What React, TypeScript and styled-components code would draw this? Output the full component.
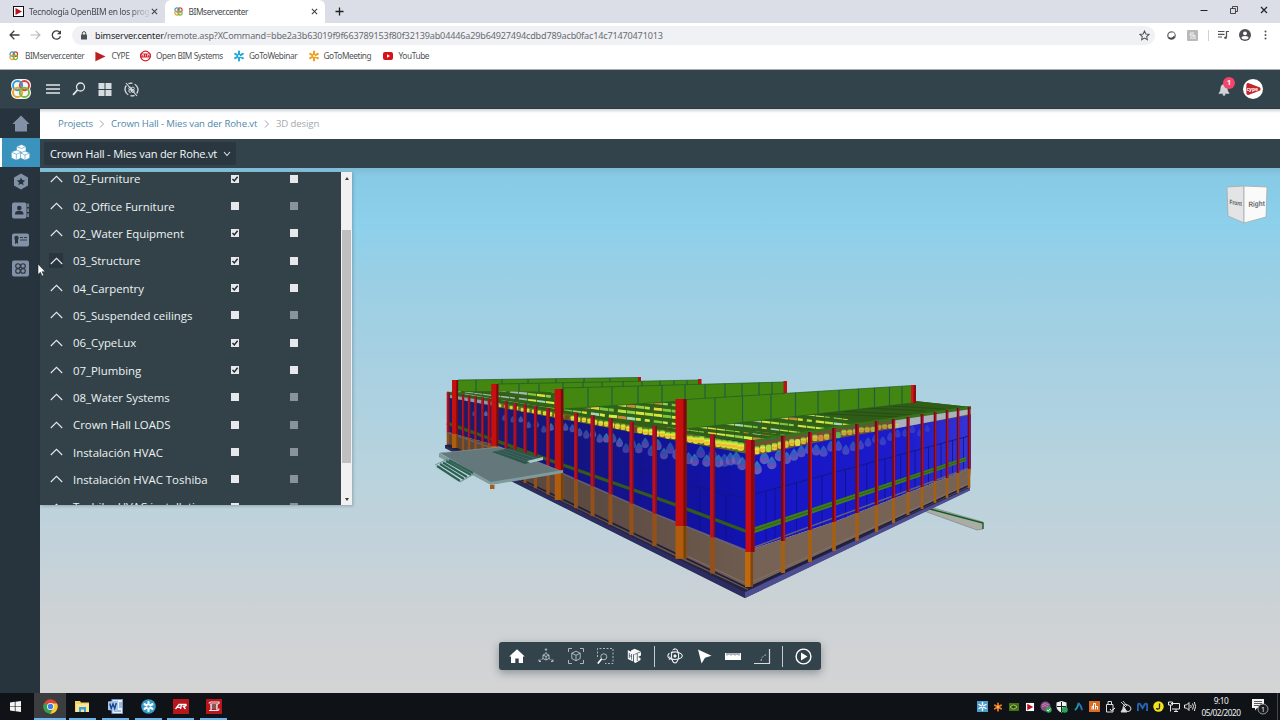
import React from "react";
import styled, { createGlobalStyle } from "styled-components";

const Global = createGlobalStyle`
  * { box-sizing: border-box; }
  html, body, #root { margin: 0; padding: 0; width: 1280px; height: 720px; overflow: hidden; }
  svg { display: block; flex: none; }
`;

const ui = `"Noto Sans", sans-serif`;
const page = `"Open Sans", sans-serif`;

const Screen = styled.div`
  width: 1280px;
  height: 720px;
  display: flex;
  flex-direction: column;
  background: #fff;
  font-family: ${page};
`;

/* ---------- browser ---------- */

const TabStrip = styled.div`
  height: 23px;
  flex: none;
  display: flex;
  justify-content: space-between;
  background: #dbdee7;
  font: 8.4px/23px ${ui};
  color: #45494d;
`;
const Tabs = styled.div`display: flex;`;
const Tab = styled.div<{ $w: number; $active?: boolean; $left: number }>`
  width: ${(p) => p.$w}px;
  height: 23px;
  padding: 0 7px 0 ${(p) => p.$left}px;
  display: flex;
  align-items: center;
  background: ${(p) => (p.$active ? "#fff" : "transparent")};
  border-radius: 6px 6px 0 0;
`;
const TabTitle = styled.span<{ $fade?: boolean; $gap: number; $track: number }>`
  flex: 1;
  margin-left: ${(p) => p.$gap}px;
  white-space: nowrap;
  letter-spacing: ${(p) => p.$track}px;
  mask-image: ${(p) => (p.$fade ? "linear-gradient(90deg, #000 82%, rgba(0, 0, 0, 0.15) 97%)" : "none")};
`;
const WindowButtons = styled.div`
  display: flex;
  align-items: center;
  height: 19px;
  gap: 22px;
  padding-right: 12px;
`;
const AddressRow = styled.div`
  height: 24px;
  flex: none;
  display: flex;
  align-items: center;
  background: #fff;
`;
const NavButtons = styled.div`
  width: 72px;
  padding-left: 9px;
  display: flex;
  gap: 10px;
`;
const Omnibox = styled.div`
  width: 1083px;
  height: 19px;
  padding: 0 5px 0 7px;
  display: flex;
  align-items: center;
  border-radius: 10px;
  background: #f0f1f4;
`;
const Url = styled.div`
  flex: 1;
  margin-left: 6px;
  font: 9.1px/19px ${ui};
  letter-spacing: -0.17px;
  color: #696c70;
  white-space: nowrap;
  b { font-weight: 400; color: #26282b; }
`;
const ExtensionBar = styled.div`
  flex: 1;
  display: flex;
  align-items: center;
  justify-content: space-between;
  padding: 0 10px 0 11px;
`;
const Divider = styled.i<{ $h: number; $c: string }>`
  width: 1px;
  height: ${(p) => p.$h}px;
  background: ${(p) => p.$c};
`;
const Bookmarks = styled.div`
  height: 22px;
  flex: none;
  padding-left: 9px;
  display: flex;
  font: 8.3px/18px ${ui};
  letter-spacing: -0.42px;
  color: #505357;
`;
const Bookmark = styled.div<{ $w: number; $gap: number }>`
  width: ${(p) => p.$w}px;
  height: 18px;
  display: flex;
  align-items: center;
  gap: ${(p) => p.$gap}px;
  white-space: nowrap;
`;

/* ---------- application ---------- */

const Header = styled.header`
  height: 40px;
  flex: none;
  display: flex;
  align-items: center;
  justify-content: space-between;
  background: #33434b;
  border-top: 1px solid #a9aeb2;
  border-bottom: 1px solid #2c3a42;
`;
const HeaderGroup = styled.div<{ $gap: number; $l?: number; $r?: number }>`
  display: flex;
  align-items: center;
  gap: ${(p) => p.$gap}px;
  padding-left: ${(p) => p.$l ?? 0}px;
  padding-right: ${(p) => p.$r ?? 0}px;
`;
const BellBox = styled.div`position: relative;`;
const Badge = styled.span`
  position: absolute;
  left: 5px;
  top: -6px;
  width: 12px;
  height: 12px;
  border-radius: 50%;
  background: #f3456c;
  color: #fff;
  font: 700 7px/12px ${page};
  text-align: center;
`;
const Body = styled.div`
  height: 584px;
  flex: none;
  display: flex;
`;
const Sidebar = styled.nav`
  width: 40px;
  background: #27333d;
`;
const SideItem = styled.div<{ $active?: boolean }>`
  height: 29px;
  display: flex;
  align-items: center;
  justify-content: center;
  padding-left: 1px;
  color: ${(p) => (p.$active ? "#fff" : "#8291a5")};
  background: ${(p) => (p.$active ? "#3a93bd" : "transparent")};
  box-shadow: ${(p) => (p.$active ? "inset 2px 0 #fff" : "none")};
`;
const Main = styled.main`
  flex: 1;
  display: flex;
  flex-direction: column;
`;
const Crumbs = styled.div`
  height: 30px;
  flex: none;
  padding-left: 18px;
  display: flex;
  align-items: center;
  background: linear-gradient(#cfd2d4, #fff 4px);
  font: 9.6px/30px ${page};
  letter-spacing: -0.12px;
  color: #5088a8;
  white-space: nowrap;
`;
const Crumb = styled.span<{ $w: number; $muted?: boolean }>`
  width: ${(p) => p.$w}px;
  color: ${(p) => (p.$muted ? "#a4a9ad" : "inherit")};
`;
const CrumbArrow = styled.svg`margin: 0 6px 0 7px;`;
const ProjectBar = styled.div`
  height: 29px;
  flex: none;
  padding: 3px 0 0 4px;
  background: #33434b;
`;
const ProjectSelect = styled.div`
  width: 192px;
  height: 23px;
  padding: 0 5px 0 6px;
  display: flex;
  align-items: center;
  justify-content: space-between;
  background: #2a3740;
  color: #f4f7f8;
  font: 500 11.1px/23px ${page};
  letter-spacing: -0.2px;
  white-space: nowrap;
`;
const Viewport = styled.section`
  position: relative;
  height: 525px;
  background: linear-gradient(#7fbcd6 0, #87cae6 8px, #8dd0eb 55px, #9ccfe4 120px, #a8d0e1 200px, #b7d3de 295px, #c3d2da 380px, #cdd2d5 445px, #d4d4d4 525px);
`;

const Panel = styled.div`
  position: absolute;
  left: 0;
  top: 4px;
  width: 312px;
  height: 333px;
  display: flex;
  overflow: hidden;
  box-shadow: 1px 1px 3px rgba(40, 60, 70, 0.3);
`;
const LayerList = styled.div`
  flex: 1;
  padding-left: 10px;
  overflow: hidden;
  background: #334249;
`;
const LayerRows = styled.div`margin-top: -7px;`;
const LayerRow = styled.div`
  height: 27.35px;
  display: flex;
  align-items: center;
  font: 500 11.4px/27px ${page};
  color: #edf2f4;
  white-space: nowrap;
`;
const Caret = styled.span<{ $hover?: boolean }>`
  width: 14px;
  height: 15px;
  flex: none;
  margin-right: 10px;
  margin-left: -1px;
  display: flex;
  align-items: center;
  justify-content: center;
  background: ${(p) => (p.$hover ? "#2a363e" : "transparent")};
`;
const LayerName = styled.span`
  width: 158.4px;
  flex: none;
`;
const Check = styled.span<{ $dim?: boolean }>`
  width: 8px;
  height: 8px;
  flex: none;
  margin-right: 50.6px;
  background: ${(p) => (p.$dim ? "#89949a" : "#e6e8ec")};
`;
const Scrollbar = styled.div`
  width: 11px;
  padding: 0 1px;
  display: flex;
  flex-direction: column;
  align-items: center;
  background: #f1f1f1;
`;
const ScrollArrow = styled.i<{ $down?: boolean }>`
  width: 0;
  height: 0;
  margin-top: ${(p) => (p.$down ? 35 : 5)}px;
  border: 2px solid transparent;
  border-top: ${(p) => (p.$down ? "3px solid #3b3b3b" : "0")};
  border-bottom: ${(p) => (p.$down ? "0" : "3px solid #3b3b3b")};
`;
const Thumb = styled.div`
  width: 9px;
  height: 233px;
  margin-top: 50px;
  background: #bfbfc0;
`;

const ToolBar = styled.div`
  position: absolute;
  left: 459px;
  top: 474px;
  width: 322px;
  height: 28px;
  padding: 0 3.3px;
  display: flex;
  align-items: center;
  border-radius: 3px;
  background: #33434b;
  box-shadow: 0 3px 8px rgba(40, 50, 60, 0.4);
`;
const Tool = styled.div`
  width: 29.35px;
  display: flex;
  justify-content: center;
`;
const ToolGap = styled.div`
  width: 11px;
  display: flex;
  justify-content: center;
`;
const ViewCube = styled.svg`
  position: absolute;
  right: 12px;
  top: 17px;
`;
const Pointer = styled.svg`
  position: absolute;
  left: -3px;
  top: 95px;
`;

/* ---------- taskbar ---------- */

const TaskBar = styled.footer`
  height: 27px;
  flex: none;
  display: flex;
  justify-content: space-between;
  background: #0f1216;
`;
const TaskGroup = styled.div`display: flex;`;
const TaskButton = styled.div<{ $w: number; $open?: boolean; $active?: boolean }>`
  width: ${(p) => p.$w}px;
  height: 27px;
  padding-right: ${(p) => (p.$open ? 0 : 3)}px;
  display: flex;
  align-items: center;
  justify-content: center;
  background-color: ${(p) => (p.$active ? "#3b3d3f" : "transparent")};
  background-image: ${(p) => (p.$open ? "linear-gradient(#6db3ee, #6db3ee)" : "none")};
  background-repeat: no-repeat;
  background-position: center bottom;
  background-size: ${(p) => (p.$active ? "100%" : "27px")} 2px;
`;
const TrayItem = styled.div<{ $w?: number }>`
  width: ${(p) => p.$w ?? 16}px;
  height: 27px;
  display: flex;
  align-items: center;
  justify-content: center;
`;
const Clock = styled.div`
  width: 46px;
  padding-top: 2px;
  font: 8.3px/12px ${ui};
  letter-spacing: -0.5px;
  text-align: center;
  color: #f0f0f0;
`;

/* ---------- icons ---------- */

const Clover = ({ s, bg }: { s: number; bg?: string }) => (
  <svg width={s} height={s} viewBox="0 0 20 20" fill="none" strokeWidth={bg ? 1.9 : 2.6}>
    {bg && <path d="M6 0h8a6 6 0 0 1 6 6q0 2.500-1 4 1 1.500 1 4a6 6 0 0 1-6 6H6a6 6 0 0 1-6-6q0-2.500 1-4-1-1.500-1-4a6 6 0 0 1 6-6" fill={bg} />}
    <circle cx="6.6" cy="6.6" r="4.6" stroke="#2f9fd0" />
    <circle cx="13.4" cy="6.6" r="4.6" stroke="#dd3b44" />
    <circle cx="6.6" cy="13.4" r="4.6" stroke="#efa02b" />
    <circle cx="13.4" cy="13.4" r="4.6" stroke="#78b93c" />
    <path d="M9.500 3.200a4.600 4.600 0 0 1 1.700 3.400" stroke="#2f9fd0" />
  </svg>
);
const CypeMark = ({ w = 11, frame }: { w?: number; frame?: boolean }) => (
  <svg width={w} height={w} viewBox="0 0 11 11">
    {frame && <rect x="0.5" y="0.5" width="10" height="10" fill="#fff" stroke="#111" />}
    {frame ? <path d="M2.500 2 9 5.500 2.500 9z" fill="#b90f22" /> : <path d="M1 1Q0 .4 .4 1.600V9.400Q0 10.600 1 10L10.500 5.500z" fill="#bb2020" />}
  </svg>
);
const Flower = ({ c, s = 12, bg }: { c: string; s?: number; bg?: string }) => (
  <svg width={s} height={s} viewBox="0 0 12 12" stroke={c} strokeWidth={bg ? 1.5 : 2.1} strokeLinecap="round">
    {bg && <rect width="12" height="12" fill={bg} stroke="none" />}
    <path d="M6 1.600v8.800M2.200 3.800l7.600 4.400M9.800 3.800 2.200 8.200" />
    <circle cx="6" cy="6" r="1" fill={bg ?? "#fff"} stroke="none" />
  </svg>
);
const Cross = ({ s = 7, c = "#3c4043" }: { s?: number; c?: string }) => (
  <svg width={s} height={s} viewBox="0 0 8 8" stroke={c} strokeWidth="1.2"><path d="m1 1 6 6M7 1 1 7" /></svg>
);
const Chevron = ({ d, w, h }: { d: string; w: number; h: number }) => (
  <svg width={w} height={h} viewBox={`0 0 ${w} ${h}`} fill="none" stroke="#e3e9ec" strokeWidth="1.1"><path d={d} /></svg>
);

/* ---------- model ---------- */

type P = [number, number];
const pts = (a: P[]) => a.map((p) => p.join(",")).join(" ");
const lerp = (a: P[], x: number) => {
  for (let i = 1; i < a.length; i++)
    if (x <= a[i][0] || i === a.length - 1) {
      const [x0, y0] = a[i - 1];
      const [x1, y1] = a[i];
      return y0 + ((y1 - y0) * (x - x0)) / (x1 - x0);
    }
  return a[0][1];
};
const noise = (n: number) => {
  const v = Math.sin(n * 127.1 + 31.7) * 43758.5453;
  return v - Math.floor(v);
};

const right = [
  [783, 436, 541, 573, 4.2], [810, 432, 530, 562, 4], [834, 428, 522, 551, 3.8], [857, 424, 513, 541, 3.6],
  [876.5, 421, 505, 532, 3.4], [893.5, 419, 498, 523, 3.2], [908, 417, 492, 515, 3], [922, 414, 487, 509, 2.8],
  [935, 412, 481, 503, 2.6], [947, 410, 478, 498, 2.5], [958, 408, 473, 493, 2.4], [969, 407, 469, 488, 2.6],
];
const leftTop: P[] = [[447, 393], [559, 411], [655, 427], [748, 441]];
const leftRed: P[] = [[447, 432], [495, 445], [559, 472], [655, 514], [748, 552]];
const leftBase: P[] = [[447, 444], [559, 500], [677, 557], [748, 590]];
const leftCols: [number, number][] = [
  [448, 2.6], [463, 2.2], [469, 2.3], [475.5, 2.4], [482.5, 2.5], [489, 2.6], [506, 2.8], [515, 3], [525, 3],
  [535.5, 3.2], [548, 3.4], [576, 3.8], [592.5, 4], [610.5, 4], [631.5, 4.2], [654.5, 4.4], [712.5, 5],
];
const bigCols = [[455, 380, 6, 434], [494.8, 384, 7, 446], [559, 389, 8.5, 473], [681, 399, 11, 526]];
const rightTop: P[] = [[752, 443], [834, 428], [971, 407]];
const rightBlue: P[] = [[752, 456], [834, 439], [971, 415]];
const rightRed: P[] = [[752, 549], [834, 522], [971, 468]];

const Girder = ({ p, cuts }: { p: P[]; cuts: number[] }) => (
  <g>
    <polygon points={pts(p)} fill="#438711" stroke="#1e5a28" strokeWidth="0.7" />
    {cuts.map((x) => (
      <line key={x} x1={x} x2={x} y1={lerp([p[0], p[1]], x)} y2={lerp([p[3], p[2]], x)} stroke="#1f5f45" strokeWidth="1.2" />
    ))}
  </g>
);

const Drop = ({ x, y, s, o, fill }: { x: number; y: number; s: number; o: number; fill: string }) => (
  <path
    d={`M${x} ${y - s * 1.5}C${x + s * 0.4} ${y - s} ${x + s} ${y - s * 0.4} ${x + s} ${y + s * 0.3}A${s} ${s} 0 0 1 ${x - s} ${y + s * 0.3}C${x - s} ${y - s * 0.4} ${x - s * 0.4} ${y - s} ${x} ${y - s * 1.5}`}
    fill={fill}
    opacity={o}
  />
);

const lampColours = ["#e8ee3a", "#f4e23a", "#a9e33c", "#ef9a32", "#c7ee47", "#8e3a22", "#54d862", "#eef04a"];
const bandColours = ["#b8e23b", "#dbe43c", "#8fd04a", "#e8d63c", "#a7d6b0", "#c98a35", "#7cc63a", "#d6ea4a"];

const Building = () => (
  <svg width="1240" height="525" viewBox="40 168 1240 525">
    <defs>
      <linearGradient id="drop" x2="0" y2="1">
        <stop offset="0" stopColor="#2fae9c" />
        <stop offset="0.4" stopColor="#3d84c0" />
        <stop offset="0.75" stopColor="#9a62b4" />
        <stop offset="1" stopColor="#3f9cb0" />
      </linearGradient>
      <linearGradient id="lamp" x2="0" y2="1">
        <stop offset="0" stopColor="#58c83a" />
        <stop offset="0.35" stopColor="#e3ea38" />
        <stop offset="0.65" stopColor="#f2b234" />
        <stop offset="1" stopColor="#d9f03c" />
      </linearGradient>
      <linearGradient id="wallL"><stop offset="0" stopColor="#1d1d66" /><stop offset="0.45" stopColor="#141482" /><stop offset="1" stopColor="#1212b0" /></linearGradient>
      <linearGradient id="wallR"><stop offset="0" stopColor="#1515c4" /><stop offset="0.7" stopColor="#1c1ccc" /><stop offset="1" stopColor="#3434d6" /></linearGradient>
      <linearGradient id="bulk"><stop offset="0" stopColor="#5a4638" /><stop offset="0.5" stopColor="#5c4b42" /><stop offset="1" stopColor="#6f5c50" /></linearGradient>
      <clipPath id="roof"><polygon points="450,391 560,392 687,399 800,398 915,401 971,407 750,443" /></clipPath>
    </defs>

    {/* ramp */}
    <polygon points="924,511 934,508 983,522 983,529 977,530" fill="#a9ada5" stroke="#777d78" strokeWidth="0.6" />
    <path d="M930 509 983 523v6" fill="none" stroke="#0f5c22" strokeWidth="1.3" />

    {/* slab */}
    <polygon points="445,445 455,444 748,587 969,485 970,490 745,598 445,448" fill="#24243f" />
    <polygon points="445,445.5 745,592 745,598 445,448" fill="#2c2c60" />
    <polygon points="745,592 970,487.5 970,490.5 745,598" fill="#4d4d90" />

    {/* rear girders */}
    <Girder p={[[458, 380], [640, 377.5], [640, 386], [458, 394]]} cuts={[476, 502, 528, 556, 584, 610]} />
    <rect x="638" y="377" width="3" height="5" fill="#b81414" />
    <Girder p={[[498, 384], [700, 380], [700, 390], [498, 400]]} cuts={[519, 539, 563, 583, 602, 623, 642, 660, 674, 687]} />
    <rect x="698" y="379" width="3.5" height="6" fill="#b81414" />

    {/* roof */}
    <g clipPath="url(#roof)">
      <rect x="440" y="385" width="540" height="60" fill="#315f1b" />
      {Array.from({ length: 11 }, (_, row) =>
        Array.from({ length: 44 }, (_, k) => {
          const x = 456 + k * 9;
          const y = 372 + row * 6.2 + (x - 456) * 0.115;
          const far = x < 520;
          return (
            <rect key={`${row}-${k}`} x={x} y={y} width={noise(row * 50 + k) > 0.2 ? 8.4 : 5} height="3" transform={`rotate(6.600 ${x} ${y})`}
              fill={far ? "#a9b4ac" : bandColours[Math.floor(noise(row * 91 + k * 3) * 8)]} />
          );
        })
      )}
      {right.slice(0, 8).map((r, i) => (
        <path key={i} d={`M${r[0] - 330} ${r[1] - 44 + i * 2}L${r[0]} ${r[1]}`} stroke="#2f6418" strokeWidth={2.4 - i * 0.1} />
      ))}
      <polygon points="800,411 860,398 915,400 975,406 870,423" fill="#2f5c17" />
      <path d="M780 412 900 417M800 409 912 415M830 406 925 411M858 404 945 409" stroke="#274f13" strokeWidth="1" />
    </g>

    {/* walls */}
    <polygon points={pts([...leftTop, ...[...leftRed].reverse()])} fill="url(#wallL)" />
    <polygon points={pts([...rightTop, ...[...rightRed].reverse()])} fill="url(#wallR)" />
    <polygon points={pts([...leftRed, ...[...leftBase].reverse()])} fill="url(#bulk)" />
    <polygon points={pts([...rightRed, [969, 487], [752, 586]])} fill="#766356" />
    <path d="M752 582 969 484M687 556 745 583" stroke="#877567" strokeWidth="0.8" />
    <path d="M748 588 970 485M447 444 748 588" fill="none" stroke="#1c1c42" strokeWidth="1.6" />

    {/* light solids */}
    {Array.from({ length: 40 }, (_, i) => {
      const x = 474 + Math.pow(i / 40, 0.85) * 274;
      const s = 1.8 + ((x - 470) / 276) * 3.2;
      const y = lerp(leftTop, x) + 8 + s * 2.2 + noise(i + 9) * s * 3;
      return <Drop key={i} x={x} y={y} s={s} fill="url(#drop)" o={0.4 + noise(i) * 0.35} />;
    })}
    {Array.from({ length: 24 }, (_, i) => {
      const x = 757 + i * 7.4;
      const s = 4.9 - i * 0.1;
      const y = lerp(rightBlue, x) + 4 + noise(i + 40) * s * 2.6;
      return <Drop key={i} x={x} y={y} s={s} fill="url(#drop)" o={0.75 - i * 0.022} />;
    })}
    <polygon points="497,402 748,443 748,454 497,407" fill="#5f6a1c" />
    <polygon points={pts([...rightTop, ...[...rightBlue].reverse()])} fill="#6f5236" />
    <polygon points="893,419 971,407 971,414 893,429" fill="#aab1bc" />
    <polygon points="450,394 500,401 500,407 450,398" fill="#96959f" />
    {Array.from({ length: 44 }, (_, i) => {
      const x = 500 + i * 5.6;
      const s = 1.5 + ((x - 500) / 250) * 2.3;
      const odd = noise(i + 5);
      return <rect key={i} x={x - s} y={lerp(leftTop, x) + 2 + odd * s * 0.5} width={s * 1.9} height={s * 2.2} rx={s * 0.7} fill={odd > 0.85 ? "#7a4424" : "url(#lamp)"} />;
    })}
    {Array.from({ length: 25 }, (_, i) => {
      const x = 757 + i * 5.8;
      const odd = noise(i + 55);
      return <rect key={i} x={x - 2.7} y={lerp(rightTop, x) + 3 + odd * 2} width="5.400" height={8 - i * 0.14} rx="2.200" fill={odd > 0.6 ? lampColours[i % 8] : "url(#lamp)"} opacity={1 - i * 0.02} />;
    })}

    {/* mullions */}
    <path d="M755 494 969 436M690 485 745 498M640 470 680 481M565 448 650 470" fill="none" stroke="#15157a" strokeWidth="0.9" />
    {right.slice(0, 11).map((r, i) => {
      const n = right[i + 1];
      const x = (r[0] + n[0]) / 2;
      return <path key={i} d={`M${x} ${lerp([[755, 494], [969, 436]], x)}V${lerp(rightRed, x)}`} stroke="#101080" strokeWidth="0.8" />;
    })}
    <path d="M766 491V543M775 488V540M700 488V530M726 495V540" stroke="#101080" strokeWidth="0.8" />
    <path d="M752 548 969 468M447 432 559 472 655 514 748 551" fill="none" stroke="#665f74" strokeWidth="1.4" />

    {/* rails */}
    <path d="M447 423 563 465 676 505 748 532" fill="none" stroke="#34591b" strokeWidth="3.4" />
    <polygon points="752,528 966,457 966,461 752,534" fill="#3f7c1c" />
    <path d="M752 531 966 459" stroke="#285315" strokeWidth="0.7" />
    <path d="M447 393 559 411 655 427 748 441" fill="none" stroke="#2d5f18" strokeWidth="3" />
    <path d="M750 442 834 428 971 407.500" fill="none" stroke="#38721b" strokeWidth="3" />

    {/* front girders */}
    <Girder p={[[563, 388], [785, 382], [785, 394], [563, 409]]} cuts={[588, 612, 638, 662, 685, 705, 725, 742, 759, 772]} />
    <rect x="783.5" y="381" width="3.5" height="12" fill="#b81414" />
    <Girder p={[[686, 399.5], [913, 385.5], [913, 403], [686, 429]]} cuts={[715, 742.5, 771, 795.5, 818, 839, 858.5, 874.5, 889.5, 902]} />
    <rect x="911" y="385" width="5" height="18" fill="#8f0d10" /><rect x="911" y="385" width="2.5" height="18" fill="#d01818" />

    {/* columns */}
    {leftCols.map(([x, w]) => {
      const t = lerp(leftTop, x) - 1;
      const m = lerp(leftRed, x);
      return (
        <g key={x}>
          <rect x={x - w / 2} y={t} width={w} height={m - t} fill="#ba1122" />
          <rect x={x + w / 5} y={t} width={w / 3} height={m - t} fill="#761020" />
          <rect x={x - w / 2} y={m} width={w} height={lerp(leftBase, x) - m} fill="#93501a" />
        </g>
      );
    })}
    {right.map(([x, t, m, b, w]) => (
      <g key={x}>
        <rect x={x - w / 2} y={t} width={w} height={m - t} fill="#6f0a1c" />
        <rect x={x - w / 2 + w * 0.6} y={t} width={w * 0.4} height={m - t} fill="#c01424" />
        <rect x={x - w / 2} y={m} width={w} height={b - m} fill="#a45f14" />
      </g>
    ))}
    {bigCols.map(([x, t, w, m]) => (
      <g key={x}>
        <rect x={x - w / 2} y={t} width={w} height={m - t} fill="#c60f0f" />
        <rect x={x + w * 0.22} y={t} width={w * 0.28} height={m - t} fill="#760c0c" />
        <rect x={x - w / 2} y={m} width={w} height={lerp(leftBase, x) - m} fill="#b05c0c" />
        <rect x={x + w * 0.22} y={m} width={w * 0.28} height={lerp(leftBase, x) - m} fill="#77440c" />
      </g>
    ))}
    <rect x="745.5" y="440" width="9" height="112" fill="#c80e14" />
    <rect x="751" y="440" width="3.5" height="112" fill="#860a12" />
    <rect x="745" y="552" width="8" height="35" fill="#c0680c" />
    <rect x="750.5" y="552" width="2.5" height="35" fill="#80460c" />

    {/* entrance platform */}
    <polygon points="440,453 500,447 563,472 491,483" fill="#64777b" stroke="#7d9699" strokeWidth="0.7" />
    <polygon points="439,453 491,482 563,470 563,473 491,485 439,457" fill="#7f9b9d" />
    <polygon points="492,452 510,448 543,458 525,464" fill="#2f554c" />
    <path d="M496 451 529 462M501 450 533 461M506 449 538 459" stroke="#416b61" strokeWidth="0.8" />
    <polygon points="527,461 543,457 543,460 530,463" fill="#a9c6c8" />
    <path d="M437 466 460 481M440 464 464 479M443 462.500 467 477M446 461 471 475M449 460 473 473" stroke="#2f6152" strokeWidth="2.1" />
    <path d="M435 465 448 459M460 482 474 474" stroke="#5f857c" strokeWidth="0.8" />
    <rect x="490" y="485" width="4.5" height="4" fill="#a55c16" />
  </svg>
);

/* ---------- data ---------- */

const layers: [string, boolean][] = [
  ["02_Furniture", true], ["02_Office Furniture", false], ["02_Water Equipment", true], ["03_Structure", true],
  ["04_Carpentry", true], ["05_Suspended ceilings", false], ["06_CypeLux", true], ["07_Plumbing", true],
  ["08_Water Systems", false], ["Crown Hall LOADS", false], ["Instalación HVAC", false],
  ["Instalación HVAC Toshiba", false], ["Toshiba HVAC installation", false],
];

const sideIcons = [
  <svg key="home" width="18" height="17" viewBox="0 0 18 17" fill="currentColor"><path d="M9 .5 17.600 9H15v7.500H3V9H.4z" /></svg>,
  <svg key="cubes" width="19" height="17" viewBox="0 0 19 17" fill="currentColor" stroke="#3a93bd" strokeWidth="0.6">
    <path d="m10.500.5 4.500 2v5.500l-4.500 2L5.500 8V2.500z" /><path d="m5.300 6 5 2v6l-5 2.300-5-2.300V8z" /><path d="m14 7 4.800 2v5L14 16.300 9.500 14V9z" />
    <path d="m5.500 2.500 5 2 4.500-2M.3 8l5 2.300 5-2.300M5.300 10.300v6M9.500 9 14 11l4.800-2M14 11v5.300" fill="none" />
  </svg>,
  <svg key="hex" width="16" height="17" viewBox="0 0 16 17" fill="currentColor"><path d="m8 .5 7 4v8l-7 4-7-4v-8z" /><path d="m8 4.400 1.200 2.700 2.900.3L10 9.400l.6 2.900L8 10.800l-2.600 1.500.6-2.900-2.100-2 2.900-.3z" fill="#27333d" /></svg>,
  <svg key="contacts" width="17" height="17" viewBox="0 0 17 17" fill="currentColor"><rect x="0" y="0.5" width="14.5" height="16" rx="2" /><path d="M15.300 1.500h1.500v3.500h-1.500zM15.300 6.500h1.500V10h-1.500zM15.300 11.500h1.500V15h-1.500z" /><circle cx="7.300" cy="6" r="2.300" fill="#27333d" /><path d="M3 12.500c0-3 1.500-3.700 4.300-3.700s4.200.7 4.200 3.700z" fill="#27333d" /></svg>,
  <svg key="license" width="17" height="14" viewBox="0 0 17 14"><rect y="0.5" width="17" height="13" rx="2" fill="currentColor" /><circle cx="4.500" cy="5" r="2.200" fill="#27333d" /><path d="M3 6.500v4.500l1.500-1L6 11V6.500z" fill="#27333d" /><path d="M8 4.500h3M12 4.500h3M8 7h7" stroke="#27333d" strokeWidth="0.9" /></svg>,
  <svg key="apps" width="17" height="17" viewBox="0 0 17 17" fill="none"><rect y="0.5" width="17" height="16" rx="2" fill="currentColor" /><g stroke="#27333d" strokeWidth="1.100"><circle cx="6" cy="6" r="2.300" /><circle cx="11" cy="6" r="2.300" /><circle cx="6" cy="11" r="2.300" /><circle cx="11" cy="11" r="2.300" /></g></svg>,
];

const line = { fill: "none", stroke: "#bcc5ca", strokeWidth: 0.9 };
const tools = [
  <svg key="a" width="16" height="14" viewBox="0 0 16 14" fill="#fff"><path d="M8 .3 15.800 7.500H14V14H9.700V9.500H6.300V14H2V7.500H.2z" /></svg>,
  <svg key="b" width="16" height="16" viewBox="0 0 16 16" {...line}><path d="m8 5.500 3 1.500v3.500L8 12l-3-1.500V7zM5 7l3 1.500L11 7M8 8.500V12" /><path d="M8 1v4M1 13l4-2.500M15 13l-4-2.500" strokeDasharray="2 1" /><path d="M6.800 2 8 .6 9.200 2M1 11.500V13.500h2M15 11.500v2h-2" /></svg>,
  <svg key="c" width="16" height="16" viewBox="0 0 16 16" {...line}><path d="m8 3.200 4.200 2v5.300L8 12.700l-4.200-2.200V5.200zM3.800 5.200 8 7.300l4.200-2.100M8 7.300v5.400" /><path d="M.5 4V.5H4M12 .5h3.500V4M15.500 12v3.500H12M4 15.500H.5V12" /></svg>,
  <svg key="d" width="17" height="16" viewBox="0 0 17 16" {...line}><path d="M.5 9V.5h15.500v15H8" strokeDasharray="2 1.500" /><circle cx="6.800" cy="8.800" r="3" /><path d="m4.600 11-3.800 4.500" strokeWidth="1.700" stroke="#fff" /></svg>,
  <svg key="e" width="15" height="16" viewBox="0 0 15 16">
    <path d="m7.500.8 6.500 2.600v4L11 9l2.500 1v2L8.500 15 7 14.300V6.500L4 5V2.500z" fill="#f5f7f8" />
    <path d="M.8 2 6.200 4.800v8.700L.8 11z" fill="#f5f7f8" />
    <path d="M2.300 5v5M4.500 6v5.500M2.300 7.500l2.200 1M7.500 6.500 14 3.600M10.300 5.500v7.500" fill="none" stroke="#33434b" strokeWidth="0.7" />
  </svg>,
  null,
  <svg key="f" width="16" height="16" viewBox="0 0 16 16" {...line} stroke="#eef1f3"><path d="M6.500 1.800C8 .3 9.700.8 10.600 3c1.300 3.300 1 8-.6 10.600-1.300 1.900-3 1.700-4.200-.2C4.200 10.800 4 6 5.300 3.500" strokeWidth="1.100" /><path d="M2.500 5.300C.6 6.700.2 8.500 2 10c2.800 2 9.200 2 12-.1 1.900-1.500 1.600-3.200-.5-4.500-2.600-1.500-7-1.700-9.700-.6" strokeWidth="1.100" /><circle cx="8" cy="8" r="1.200" fill="#fff" /><path d="m5.500 2.200 2-1.700M2.500 8.500l1.300 2-2 1.200" /></svg>,
  <svg key="g" width="15" height="15" viewBox="0 0 15 15" fill="#fff"><path d="M1 .5 14.500 6.700 8 8.800 4.600 14.500z" /></svg>,
  <svg key="h" width="16" height="7" viewBox="0 0 16 7"><rect width="16" height="7" fill="#fff" /><path d="M2 0v2.500M4 0v2M6 0v2.500M8 0v2M10 0v2.500M12 0v2M14 0v2.500" stroke="#33434b" strokeWidth="0.800" /></svg>,
  <svg key="i" width="17" height="17" viewBox="0 0 17 17" {...line}><path d="M0 15.500h16M15.500 1v14.500" strokeWidth="1.200" stroke="#d5dbde" /><path d="M7 13c.4-3.500 2-5.500 6-6.500" strokeDasharray="2 1.300" /></svg>,
  null,
  <svg key="j" width="17" height="17" viewBox="0 0 17 17"><circle cx="8.500" cy="8.500" r="7.400" fill="none" stroke="#fff" strokeWidth="1.400" /><path d="M6 4.500 12.500 8.500 6 12.500z" fill="#fff" /></svg>,
];

const tray = [
  <Flower key="1" c="#fff" bg="#4c9dcd" s={11} />,
  <Flower key="2" c="#f07e1c" s={10} />,
  <svg key="3" width="10" height="8" viewBox="0 0 10 8"><rect width="10" height="8" fill="#447018" /><path d="M1 4q3.500-4 7 0-3.500 4-7 0" fill="none" stroke="#9fc35e" /><circle cx="4.500" cy="4" r="1.200" fill="#203a08" /></svg>,
  <CypeMark key="4" w={10} frame />,
  <svg key="5" width="12" height="12" viewBox="0 0 12 12"><circle cx="5.500" cy="5.500" r="5" fill="#81518f" /><path d="M2 4q3-3 7 0M2 6q3-3 6 0" stroke="#dc789b" fill="none" /><circle cx="8.700" cy="8.700" r="3" fill="#30a452" /><path d="m7 8.800 1.300 1.200 2-2.300" stroke="#fff" fill="none" /></svg>,
  <svg key="6" width="12" height="12" viewBox="0 0 12 12"><path d="m5.500 0 5 1.500v4q0 4-5 6-5-2-5-6v-4z" fill="#f2f2f2" /><path d="M5.500 1v10M1 5.500h9" stroke="#17191c" /><circle cx="8.800" cy="8.800" r="3" fill="#25a558" /></svg>,
  <svg key="7" width="9" height="9" viewBox="0 0 10 10" fill="none" strokeWidth="2"><path d="M1 9Q4 7 5 1" stroke="#1d9fa6" /><path d="M5 1q3 3 4 8" stroke="#2573c4" /></svg>,
  <svg key="8" width="11" height="11" viewBox="0 0 11 11"><rect width="11" height="11" fill="#dc6b24" /><path d="M3 8.500V5.500H4.500M4.500 8.500v-6h2v6M6.500 5.500h2v3" stroke="#fff" fill="none" /></svg>,
  <svg key="9" width="10" height="12" viewBox="0 0 10 12" fill="none" stroke="#dedede"><path d="M3 .5h3.500v3H3zM1.500 3.500h6.500v7.500h-6.500z" /><path d="m5 8 1.500 1.800L10 7" stroke="#fff" /></svg>,
  <svg key="10" width="12" height="12" viewBox="0 0 12 12" fill="none" stroke="#cfcfcf"><path d="m1 1 5 5M3 0l4 5" /><ellipse cx="7" cy="7" rx="4" ry="3" transform="rotate(30 7 7)" /><path d="M1 11h6L4 6z" fill="#ddd" /></svg>,
  <svg key="11" width="11" height="10" viewBox="0 0 11 10"><path d="M1 9Q0 0 3 2l2.500 4L8 2q3-2 2 7" fill="none" stroke="#2464b0" strokeWidth="2" /></svg>,
  <svg key="12" width="11" height="11" viewBox="0 0 11 11"><circle cx="5.500" cy="5.500" r="5.200" fill="#f2e31b" /><path d="M6.500 2.500v4q0 1.800-2 1.500-1 0-1-1" fill="none" stroke="#222" strokeWidth="1.300" /></svg>,
  <svg key="13" width="12" height="11" viewBox="0 0 12 11" fill="none" stroke="#e8e8e8"><path d="M3 2.500h8.500v5.500H4M6 10.500h4M8 8v2M.5 1h4v3h-4zM2.500 4v6.500" /></svg>,
  <svg key="14" width="12" height="11" viewBox="0 0 12 11" fill="none" stroke="#e8e8e8"><path d="M.5 4h2L5 1.500v8L2.500 7h-2zM6.700 4q1 1.500 0 3M8.500 2.500q2 3 0 6M10.300 1q2.600 4.500 0 9" /></svg>,
];

export default function App() {
  return (
    <Screen>
      <Global />
      <TabStrip>
        <Tabs>
          <Tab $w={165} $left={13}>
            <CypeMark frame />
            <TabTitle $fade $gap={5} $track={-0.26}>Tecnología OpenBIM en los prog</TabTitle>
            <Cross />
          </Tab>
          <Tab $w={160} $left={9} $active>
            <Clover s={9} />
            <TabTitle $gap={5.5} $track={-0.44}>BIMserver.center</TabTitle>
            <Cross />
          </Tab>
          <Tab $w={30} $left={10}>
            <svg width="9" height="9" viewBox="0 0 9 9" stroke="#222" strokeWidth="1.300"><path d="M4.500.5v8M.5 4.500h8" /></svg>
          </Tab>
        </Tabs>
        <WindowButtons>
          <svg width="8" height="8" viewBox="0 0 8 8" stroke="#222"><path d="M.5 4.500h7" /></svg>
          <svg width="8" height="8" viewBox="0 0 8 8" stroke="#222" fill="none" strokeWidth="0.8"><path d="M.5 2.500h5v5h-5zM2.500 2.500v-2h5v5h-2" /></svg>
          <Cross s={8} c="#222" />
        </WindowButtons>
      </TabStrip>
      <AddressRow>
        <NavButtons>
          <svg width="11" height="10" viewBox="0 0 11 10" fill="none" stroke="#3d4043" strokeWidth="1.300"><path d="M10.500 5H1M5.300.8 1.100 5l4.200 4.200" /></svg>
          <svg width="11" height="10" viewBox="0 0 11 10" fill="none" stroke="#b6b8bb" strokeWidth="1.200"><path d="M.5 5H10M5.700.8 9.900 5 5.700 9.200" /></svg>
          <svg width="11" height="10" viewBox="0 0 11 10" fill="none" stroke="#3d4043" strokeWidth="1.300"><path d="M9.200 3A4.200 4.200 0 1 0 9.500 6.300" /><path d="M10 .2v4H6z" fill="#3d4043" stroke="none" /></svg>
        </NavButtons>
        <Omnibox>
          <svg width="10" height="9" viewBox="0 0 10 9"><rect x="2" y="3.500" width="6" height="5" rx="0.600" fill="#4c4f53" /><path d="M3.300 4V2.300a1.700 1.700 0 0 1 3.400 0V4" fill="none" stroke="#4c4f53" /></svg>
          <Url><b>bimserver.center</b>/remote.asp?XCommand=bbe2a3b63019f9f663789153f80f32139ab04446a29b64927494cdbd789acb0fac14c71470471013</Url>
          <svg width="11" height="11" viewBox="0 0 12 12" fill="none" stroke="#505358" strokeWidth="1.100"><path d="m6 1 1.500 3.300 3.500.4-2.600 2.400.7 3.600L6 8.900l-3.100 1.800.7-3.600L1 4.700l3.500-.4z" /></svg>
        </Omnibox>
        <ExtensionBar>
          <svg width="11" height="11" viewBox="0 0 11 11"><circle cx="5.500" cy="5.500" r="3.700" fill="none" stroke="#666" strokeWidth="1.300" /><circle cx="7" cy="4" r="1.500" fill="#fff" /><path d="M2.500 7.500q3 2.500 6-1" stroke="#444" fill="none" strokeWidth="1.500" /></svg>
          <svg width="11" height="11" viewBox="0 0 11 11"><rect width="11" height="11" rx="1" fill="#b9b9b9" /><path d="M4 2v7M4 4.500H2.500M6 9V2M6 5.500h2V9" stroke="#f5f5f5" fill="none" /></svg>
          <Divider $h={11} $c="#cfd1d4" />
          <svg width="11" height="10" viewBox="0 0 11 10" fill="none" stroke="#505358" strokeWidth="1.200"><path d="M0 1.500h6.500M0 4.300h6.500M0 7h4" /><path d="M8.500 7.500V1.500H11" /><circle cx="7.500" cy="7.700" r="1.300" fill="#505358" stroke="none" /></svg>
          <svg width="12" height="12" viewBox="0 0 12 12"><circle cx="6" cy="6" r="6" fill="#4d5055" /><circle cx="6" cy="4.300" r="1.900" fill="#fff" /><path d="M2.300 9q.4-2 3.700-2t3.700 2Q8.300 10.600 6 10.600T2.300 9" fill="#fff" /></svg>
          <svg width="9" height="10" viewBox="0 0 9 10" fill="#505358"><circle cx="4.500" cy="1.500" r="1" /><circle cx="4.500" cy="5" r="1" /><circle cx="4.500" cy="8.500" r="1" /></svg>
        </ExtensionBar>
      </AddressRow>
      <Bookmarks>
        <Bookmark $w={86} $gap={6.5}><Clover s={9.5} />BIMserver.center</Bookmark>
        <Bookmark $w={45} $gap={5.5}><CypeMark />CYPE</Bookmark>
        <Bookmark $w={93} $gap={5}>
          <svg width="11" height="12" viewBox="0 0 11 12"><circle cx="5.500" cy="6" r="4.800" fill="#fff" stroke="#d5202b" strokeWidth="1.300" /><rect y="3.500" width="11" height="4" rx="1" fill="#d5202b" /><path d="M2 6.500v-2h1.500v2M5.500 4.500v2M7.500 6.500v-2h1.700v2" stroke="#fff" strokeWidth="0.700" fill="none" /></svg>
          Open BIM Systems
        </Bookmark>
        <Bookmark $w={74.5} $gap={4}><Flower c="#27a8d8" />GoToWebinar</Bookmark>
        <Bookmark $w={75.5} $gap={4}><Flower c="#f0a021" />GoToMeeting</Bookmark>
        <Bookmark $w={60} $gap={5.5}>
          <svg width="10" height="8" viewBox="0 0 10 8"><rect width="10" height="8" rx="2" fill="#d5111a" /><path d="m4 2.200 3 1.800-3 1.800z" fill="#fff" /></svg>
          YouTube
        </Bookmark>
      </Bookmarks>

      <Header>
        <HeaderGroup $gap={13} $l={11}>
          <Clover s={20} bg="#f4f6f6" />
          <HeaderGroup $gap={12} $l={2}>
            <svg width="14" height="10" viewBox="0 0 14 10" stroke="#e2e7e9" strokeWidth="1.400"><path d="M0 1h14M0 5h14M0 9h14" /></svg>
            <svg width="14" height="14" viewBox="0 0 14 14" fill="none" stroke="#e2e7e9"><circle cx="8.500" cy="5" r="4" strokeWidth="1.300" /><path d="M5.500 8 1 12.800" strokeWidth="1.800" /></svg>
            <svg width="14" height="13" viewBox="0 0 14 13" fill="#d7dcdf"><path d="M.5 0h6v6h-6zM7.500 0h6v6h-6zM.5 7h6v6h-6zM7.500 7h6v6h-6z" /></svg>
            <svg width="15" height="15" viewBox="0 0 15 15" fill="none" stroke="#dbe1e4" strokeWidth="1.300">
              <path d="M4.300 12.800A6.300 6.300 0 0 1 2.300 3.500M12.700 11.500A6.300 6.300 0 0 0 10.700 2.200M4.500 1.700a6 6 0 0 1 4-.4M10.500 13.300a6 6 0 0 1-4 .4" />
              <path d="M2 1 13 14" strokeWidth="1.100" />
              <g strokeWidth="0.9"><circle cx="6.200" cy="6.500" r="1.400" /><circle cx="8.900" cy="6.500" r="1.400" /><circle cx="6.200" cy="9" r="1.400" /><circle cx="8.900" cy="9" r="1.400" /></g>
            </svg>
          </HeaderGroup>
        </HeaderGroup>
        <HeaderGroup $gap={13} $r={17}>
          <BellBox>
            <svg width="12" height="13" viewBox="0 0 12 13" fill="#ced4d8"><path d="M6 1q3.500.5 3.500 4.500 0 3 1.800 4.500v.8H.7V10q1.800-1.500 1.800-4.500Q2.500 1.500 6 1" /><circle cx="6" cy="11.500" r="1.300" /></svg>
            <Badge>1</Badge>
          </BellBox>
          <svg width="20" height="20" viewBox="0 0 20 20"><circle cx="10" cy="10" r="10" fill="#fff" /><path d="M3.500 5Q2.800 10 3.500 15q.8 1.300 2.500.8L17 11.500q1.500-1.500 0-3L6 4.200Q4.300 3.700 3.500 5" fill="#c0272d" /><text x="9.300" y="11.600" fontFamily="Open Sans" fontWeight="700" fontSize="5" textAnchor="middle" fill="#fff">cype</text></svg>
        </HeaderGroup>
      </Header>

      <Body>
        <Sidebar>
          {sideIcons.map((icon, i) => <SideItem key={i} $active={i === 1}>{icon}</SideItem>)}
        </Sidebar>
        <Main>
          <Crumbs>
            <Crumb $w={34}>Projects</Crumb>
            <CrumbArrow width="6" height="8" viewBox="0 0 6 8" fill="none" stroke="#9ca3a8"><path d="m1 .5 3.500 3.500L1 7.500" /></CrumbArrow>
            <Crumb $w={146}>Crown Hall - Mies van der Rohe.vt</Crumb>
            <CrumbArrow width="6" height="8" viewBox="0 0 6 8" fill="none" stroke="#9ca3a8"><path d="m1 .5 3.500 3.500L1 7.500" /></CrumbArrow>
            <Crumb $w={60} $muted>3D design</Crumb>
          </Crumbs>
          <ProjectBar>
            <ProjectSelect>
              Crown Hall - Mies van der Rohe.vt
              <Chevron w={8} h={6} d="m1 1 3 3.500L7 1" />
            </ProjectSelect>
          </ProjectBar>
          <Viewport>
            <Building />
            <ViewCube width="42" height="40" viewBox="0 0 42 40">
              <polygon points="1,2 18,1 18,38 2,31" fill="#e4e4e6" stroke="#a3a9ad" strokeWidth="0.800" />
              <polygon points="18,1 41,2 40,32 18,38" fill="#fafafa" stroke="#a3a9ad" strokeWidth="0.800" />
              <text transform="matrix(.75 .12 0 1 3.500 19)" fontFamily="Liberation Sans" fontWeight="700" fontSize="6.500" fill="#5c5f62">Front</text>
              <text transform="matrix(.85 -.06 0 1 22.500 22)" fontFamily="Liberation Sans" fontWeight="700" fontSize="7.500" fill="#66696c">Right</text>
            </ViewCube>
            <Panel>
              <LayerList>
                <LayerRows>
                  {layers.map(([name, on], i) => (
                    <LayerRow key={name}>
                      <Caret $hover={i === 3}><Chevron w={13} h={8} d="M.8 7 6.500 1.300 12.200 7" /></Caret>
                      <LayerName>{name}</LayerName>
                      <Check>
                        {on && <svg width="8" height="8" viewBox="0 0 8 8" fill="none" stroke="#22272b" strokeWidth="1.400"><path d="M1.500 4 3.300 6 6.600 1.700" /></svg>}
                      </Check>
                      <Check $dim={!on} />
                    </LayerRow>
                  ))}
                </LayerRows>
              </LayerList>
              <Scrollbar>
                <ScrollArrow />
                <Thumb />
                <ScrollArrow $down />
              </Scrollbar>
            </Panel>
            <ToolBar>
              {tools.map((t, i) => t ? <Tool key={i}>{t}</Tool> : <ToolGap key={i}><Divider $h={21} $c="#c3cbcf" /></ToolGap>)}
            </ToolBar>
            <Pointer width="9" height="14" viewBox="0 0 9 14"><path d="M1 1v10.500l2.400-2.200 1.700 3.800 1.700-.8-1.700-3.600H8.300z" fill="#fff" stroke="#20262b" strokeWidth="0.600" /></Pointer>
          </Viewport>
        </Main>
      </Body>

      <TaskBar>
        <TaskGroup>
          <TaskButton $w={34}><svg width="11" height="11" viewBox="0 0 11 11" fill="#f4f4f4"><path d="m0 1.500 4.800-.7v4.400H0zM5.500.7 11 0v5.200H5.500zM0 5.800h4.800v4.400L0 9.500zM5.500 5.800H11V11l-5.500-.7z" /></svg></TaskButton>
          <TaskButton $w={32} $open $active>
            <svg width="15" height="15" viewBox="0 0 15 15"><circle cx="7.500" cy="7.500" r="7.200" fill="#e24434" /><path d="M1.200 4A7.200 7.200 0 0 0 7 14.700L10.400 9z" fill="#2da350" /><path d="M14 4.500H7.500L10.500 9 7 14.700A7.200 7.200 0 0 0 14 4.500" fill="#f8cb2e" /><circle cx="7.500" cy="7.500" r="3.500" fill="#fff" /><circle cx="7.500" cy="7.500" r="2.700" fill="#417fe8" /></svg>
          </TaskButton>
          <TaskButton $w={33} $open>
            <svg width="15" height="13" viewBox="0 0 15 13"><path d="M0 1h5l1 1.500h8V12H0z" fill="#f3d268" /><path d="M1 4h13v8H1z" fill="#fbe58f" /><path d="M4 12V7h7v5H9V9.500H6V12z" fill="#3f9fdc" /></svg>
          </TaskButton>
          <TaskButton $w={33} $open>
            <svg width="15" height="15" viewBox="0 0 15 15"><rect x="4" y="0.5" width="10.5" height="14" fill="#eef3fa" stroke="#6f9bd1" /><path d="M11 4h3M11 6h3M11 8h3M6 12h7" stroke="#4f7fbe" /><path d="M0 2.500 10 1.500v11L0 11z" fill="#a9c8ec" /><path d="m1.800 4.500 1.400 5L5 5l1.700 4.500L8.300 4" fill="none" stroke="#19458e" strokeWidth="1.400" /></svg>
          </TaskButton>
          <TaskButton $w={32} $open>
            <svg width="15" height="15" viewBox="0 0 15 15"><circle cx="7.500" cy="7.500" r="7.300" fill="#349dcc" /><g stroke="#fff" strokeWidth="2.200" strokeLinecap="round"><path d="M7.500 3v9M3.600 5.200l7.800 4.600M11.400 5.200l-7.800 4.600" /></g><circle cx="7.500" cy="7.500" r="1.200" fill="#349dcc" /></svg>
          </TaskButton>
          <TaskButton $w={33} $open>
            <svg width="16" height="15" viewBox="0 0 16 15"><rect width="16" height="15" fill="#b9151c" /><path d="M2.500 10 6 5.500h2.500L7.500 10M9 5.500h4q1 1.700-2.500 2L12.500 10M4.500 8.300H8" fill="none" stroke="#fff" strokeWidth="1.300" /></svg>
          </TaskButton>
          <TaskButton $w={33} $open>
            <svg width="16" height="15" viewBox="0 0 16 15"><rect width="16" height="15" fill="#b9151c" /><path d="M3 4.500q0-1.500 2-1.500h8q.5 2-1.500 2H4M5 5v6M11 5v6M5 7h6M5 9h6M3 11.500h8.500q1.500 0 1.500-2" fill="none" stroke="#eee" strokeWidth="1.200" /><path d="M7 5v5M9 5v5" stroke="#333" /></svg>
          </TaskButton>
        </TaskGroup>
        <TaskGroup>
          {tray.map((t, i) => <TrayItem key={i}>{t}</TrayItem>)}
          <Clock>9:10<br />05/02/2020</Clock>
          <TrayItem $w={33}>
            <svg width="17" height="17" viewBox="0 0 17 17"><path d="M0 1h12v9H5l-2 2.500V10H0z" fill="#f4f4f4" /><path d="M2 3.500h8M2 5.500h8M2 7.500h6" stroke="#333" strokeWidth="0.800" /><circle cx="11" cy="11" r="5" fill="#17191c" stroke="#9a9a9a" /><text x="11" y="13.500" fontFamily="Noto Sans" fontSize="7" textAnchor="middle" fill="#fff">1</text></svg>
          </TrayItem>
          <Divider $h={27} $c="#44484c" />
          <TrayItem $w={2} />
        </TaskGroup>
      </TaskBar>
    </Screen>
  );
}
